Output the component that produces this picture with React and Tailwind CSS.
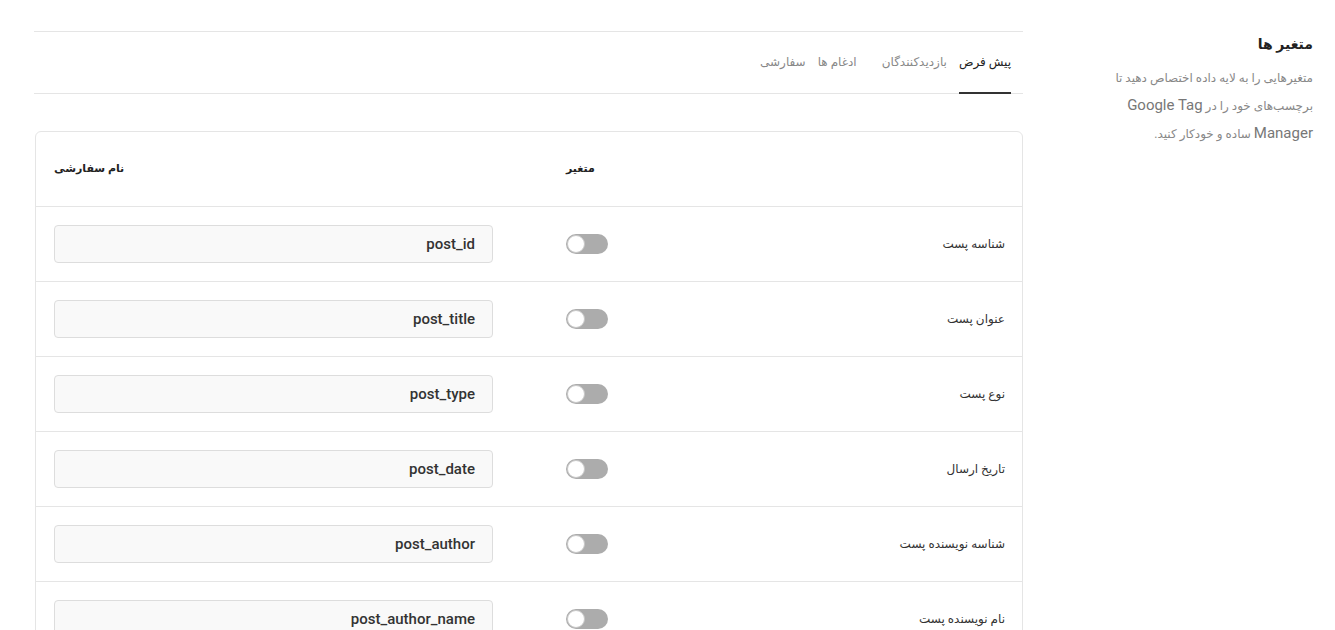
import React, { useState } from "react";

const FONT = { fontFamily: 'Roboto, "DejaVu Sans", sans-serif' };

const rows = [
  { label: "شناسه پست", name: "post_id" },
  { label: "عنوان پست", name: "post_title" },
  { label: "نوع پست", name: "post_type" },
  { label: "تاریخ ارسال", name: "post_date" },
  { label: "شناسه نویسنده پست", name: "post_author" },
  { label: "نام نویسنده پست", name: "post_author_name" },
];

const tabs = [
  { id: "default", label: "پیش فرض" },
  { id: "visitors", label: "بازدیدکنندگان" },
  { id: "integrations", label: "ادغام ها" },
  { id: "custom", label: "سفارشی" },
];

export default function App() {
  const [tab, setTab] = useState("default");
  const [on, setOn] = useState({});

  return (
    <div className="min-h-screen bg-white text-[#333]" style={FONT}>
      <div className="flex items-start pl-[34px] pr-[22px]">
        {/* main column */}
        <div className="w-[989px] shrink-0 mt-[31px]">
          <div className="flex justify-start border-y border-[#e5e5e5] h-[63px] pr-[12px]" dir="rtl">
            {tabs.map((t, i) => (
              <button
                key={t.id}
                onClick={() => setTab(t.id)}
                className={`flex items-center text-[12px] border-b-2 -mb-px ${i === 1 ? "ml-[25px]" : "ml-[12px]"} ${tab === t.id ? "border-[#333] text-[#222]" : "border-transparent text-[#888]"}`}
              >
                {t.label}
              </button>
            ))}
          </div>

          {/* variables table */}
          <div className="mt-[37px] ml-px border border-[#e5e5e5] rounded-md">
            <div className="grid grid-cols-[512px_180px_1fr] h-[75px] items-center border-b border-[#e5e5e5]">
              <div className="pl-[18px] text-[11px] font-bold text-[#222]" dir="rtl" style={{ textAlign: "left" }}>نام سفارشی</div>
              <div className="pl-[18px] text-[11px] font-bold text-[#222]" dir="rtl" style={{ textAlign: "left" }}>متغیر</div>
              <div />
            </div>
            {rows.map(r => (
              <div key={r.name} className="grid grid-cols-[512px_180px_1fr] h-[75px] items-center border-b border-[#e5e5e5]">
                <div className="pl-[18px]">
                  <div className="w-[439px] h-[38px] rounded bg-[#f9f9f9] border border-[#dddddd] flex items-center justify-end pr-[17px] text-[15px] font-medium text-[#333]">
                    {r.name}
                  </div>
                </div>
                <div className="pl-[18px]">
                  <button
                    onClick={() => setOn(s => ({ ...s, [r.name]: !s[r.name] }))}
                    className={`relative block w-[42px] h-[20px] rounded-full ${on[r.name] ? "bg-[#333]" : "bg-[#acacac]"}`}
                  >
                    <span className={`absolute top-px w-[18px] h-[18px] rounded-full bg-white border border-[#c8c8c8] ${on[r.name] ? "right-px" : "left-px"}`} />
                  </button>
                </div>
                <div className="pr-[17px] text-right text-[12px] text-[#333]" dir="rtl">{r.label}</div>
              </div>
            ))}
          </div>
        </div>

        {/* sidebar */}
        <div className="flex-1 pt-[35px] pl-[17px] text-right" dir="rtl">
          <h2 className="text-[14px] font-bold text-[#222] leading-[18px]">متغیر ها</h2>
          <p className="mt-[12px] text-[12px] text-[#888] leading-[27px]">
            متغیرهایی را به لایه داده اختصاص دهید تا
            <br />
            برچسب‌های خود را در <span className="text-[15px] text-[#777]">Google Tag</span>
            <br />
            <span className="text-[15px] text-[#777]">Manager</span> ساده و خودکار کنید.
          </p>
        </div>
      </div>
    </div>
  );
}
